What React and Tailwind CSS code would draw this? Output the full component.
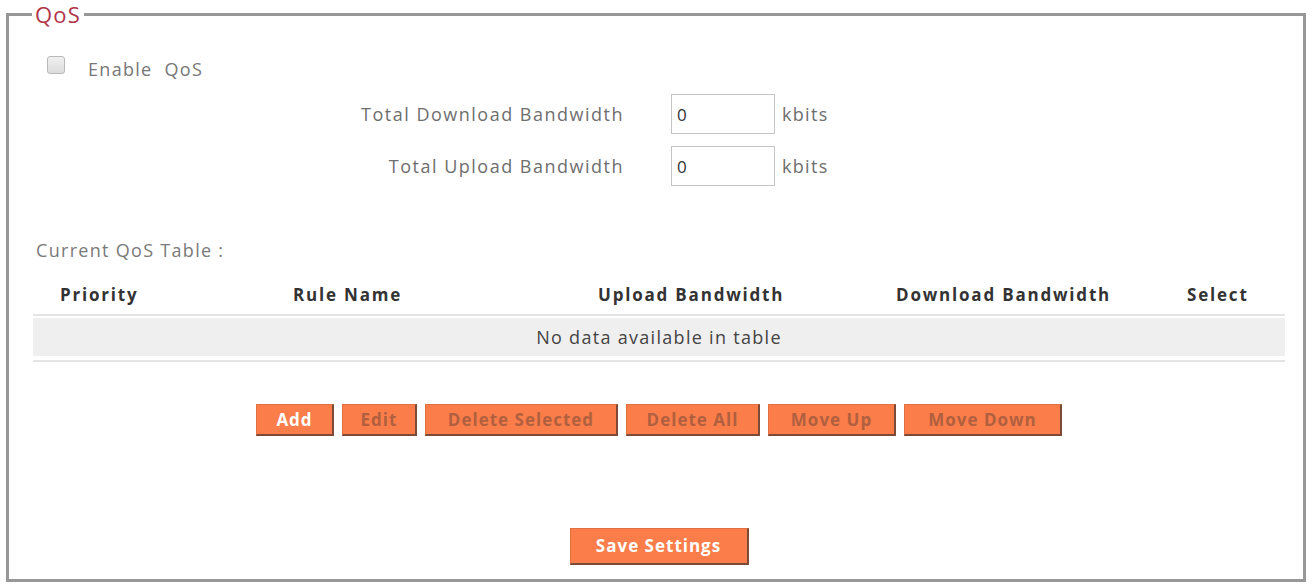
import React from 'react';

const buttons = [
  { label: 'Add', width: 'w-[78px]', active: true },
  { label: 'Edit', width: 'w-[75px]' },
  { label: 'Delete Selected', width: 'w-[193px]' },
  { label: 'Delete All', width: 'w-[134px]' },
  { label: 'Move Up', width: 'w-[128px]' },
  { label: 'Move Down', width: 'w-[158px]' },
];

function OrangeButton({ label, width, active, tall }) {
  return (
    <button
      className={`${width} ${tall ? 'h-[37px]' : 'h-[32px]'} bg-[#fb7d4a] border border-[#e0703f] border-r-2 border-b-2 border-r-[#7d4a38] border-b-[#7d4a38] font-bold text-[17px] tracking-[1px] ${active ? 'text-white' : 'text-[#b0603f]'}`}
    >
      {label}
    </button>
  );
}

function BandwidthRow({ label }) {
  return (
    <div className="flex items-center h-[40px]">
      <div className="w-[615px] text-right text-[18px] text-[#6e6e6e] tracking-[1.5px]">{label}</div>
      <input
        readOnly
        value="0"
        className="ml-[47px] w-[104px] h-[40px] border border-[#c4c4c4] px-[5px] text-[17px] text-[#333] outline-none"
      />
      <span className="ml-[7px] text-[18px] text-[#6e6e6e] tracking-[1.3px]">kbits</span>
    </div>
  );
}

export default function App() {
  return (
    <div className="bg-white w-[1312px] h-[587px] pt-[3px]" style={{ fontFamily: '"Open Sans", "Liberation Sans", sans-serif' }}>
      <fieldset className="mx-[6px] h-[579px] border-[3px] border-[#979797] px-0 pb-0">
        <legend className="ml-[23px] px-[3px] text-[22px] leading-[22px] tracking-[1.2px] text-[#b03348]">QoS</legend>

        <div className="flex items-center h-[24px] mt-[32px] ml-[38px]">
          <span className="w-[18px] h-[18px] mb-[8px] border border-[#b8b8b8] rounded-[3px] bg-gradient-to-b from-[#f0f0f0] to-[#dcdcdc]"></span>
          <span className="ml-[23px] text-[18px] text-[#777] tracking-[1.3px]">Enable&nbsp; QoS</span>
        </div>

        <div className="mt-[13px] flex flex-col gap-[12px]">
          <BandwidthRow label="Total Download Bandwidth" />
          <BandwidthRow label="Total Upload Bandwidth" />
        </div>

        <div className="mt-[52px] ml-[27px] h-[24px] leading-[24px] text-[18px] text-[#7a7a7a] tracking-[1.3px]">Current QoS Table :</div>

        <div className="ml-[24px] w-[1252px] mt-[13px]">
          <div className="grid grid-cols-[233px_305px_298px_291px_125px] h-[41px] items-center border-b-2 border-[#e4e4e4] font-bold text-[17px] tracking-[1.8px] text-[#333]">
            <div className="pl-[27px]">Priority</div>
            <div className="pl-[27px]">Rule Name</div>
            <div className="pl-[27px]">Upload Bandwidth</div>
            <div className="pl-[27px]">Download Bandwidth</div>
            <div className="pl-[27px]">Select</div>
          </div>
          <div className="pt-[2px] pb-[4px] border-b-2 border-[#e4e4e4]">
            <div className="h-[38px] bg-[#efefef] flex items-center justify-center text-[18px] text-[#444] tracking-[1.3px]">
              No data available in table
            </div>
          </div>

          <div className="mt-[42px] flex justify-center gap-[8px]">
            {buttons.map((b) => (
              <OrangeButton key={b.label} {...b} />
            ))}
          </div>

          <div className="mt-[92px] flex justify-center">
            <OrangeButton label="Save Settings" width="w-[179px]" active tall />
          </div>
        </div>
      </fieldset>
    </div>
  );
}
